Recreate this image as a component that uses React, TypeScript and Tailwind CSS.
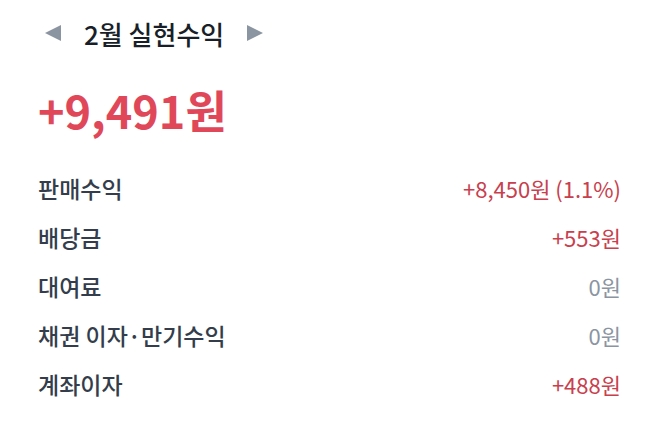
import { ReactNode } from 'react'

const FONT = { fontFamily: '"Noto Sans CJK KR", "Noto Sans", sans-serif' }

interface RowProps {
    label: string
    value: ReactNode
    tone: 'red' | 'gray'
}

function Row({ label, value, tone }: RowProps) {
    return (
        <div className="flex h-[49px] items-center justify-between">
            <span className="text-[23px] font-medium text-[#333d4b]">{label}</span>
            <span className={tone === 'red' ? 'text-[22px] text-[#c8404e]' : 'text-[22px] text-[#8b95a1]'}>
                {value}
            </span>
        </div>
    )
}

export default function App() {
    const rows: RowProps[] = [
        { label: '판매수익', value: '+8,450원 (1.1%)', tone: 'red' },
        { label: '배당금', value: '+553원', tone: 'red' },
        { label: '대여료', value: '0원', tone: 'gray' },
        { label: '채권 이자·만기수익', value: '0원', tone: 'gray' },
        { label: '계좌이자', value: '+488원', tone: 'red' },
    ]

    return (
        <div className="h-[430px] w-[660px] bg-white px-[38px]" style={FONT}>
            {/* Month selector */}
            <div className="flex h-[66px] items-center gap-[22px] pl-[6px]">
                <svg width="18" height="18" viewBox="0 0 18 18">
                    <path d="M17 1 L1 9 L17 17 Z" fill="#8b95a1" />
                </svg>
                <span className="text-[26px] font-medium text-[#191f28]">2월 실현수익</span>
                <svg width="18" height="18" viewBox="0 0 18 18">
                    <path d="M1 1 L17 9 L1 17 Z" fill="#8b95a1" />
                </svg>
            </div>

            {/* Total */}
            <div className="flex h-[88px] items-center text-[45px] font-bold text-[#e0485a]">
                +9,491원
            </div>

            {/* Breakdown */}
            <div className="mt-[10px] pr-[1px]">
                {rows.map((row) => (
                    <Row key={row.label} {...row} />
                ))}
            </div>
        </div>
    )
}
